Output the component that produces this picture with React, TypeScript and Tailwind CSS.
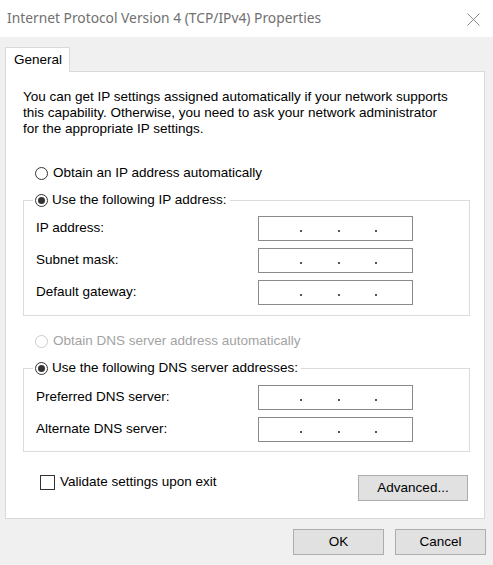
import React from 'react';

const Radio: React.FC<{ checked?: boolean; disabled?: boolean }> = ({ checked, disabled }) => (
    <span
        className={`w-[13px] h-[13px] rounded-full border bg-white flex items-center justify-center shrink-0 ${disabled ? 'border-[#cccccc]' : 'border-[#333333]'}`}
    >
        {checked && <span className="w-[7px] h-[7px] rounded-full bg-[#333333]" />}
    </span>
);

const IpBox: React.FC = () => (
    <div className="w-[155px] h-[25px] border border-[#8a8a8a] bg-white flex items-center pl-[41px] gap-[35.5px] pt-[5px]">
        <span className="w-[2px] h-[2px] bg-[#555555]" />
        <span className="w-[2px] h-[2px] bg-[#555555]" />
        <span className="w-[2px] h-[2px] bg-[#555555]" />
    </div>
);

const FieldRow: React.FC<{ label: string }> = ({ label }) => (
    <div className="flex items-center h-[25px] pl-[12px]">
        <span className="w-[222px]">{label}</span>
        <IpBox />
    </div>
);

const Button: React.FC<{ label: string; w: string }> = ({ label, w }) => (
    <button className={`${w} h-[26px] bg-[#e1e1e1] border border-[#adadad] flex items-center justify-center text-black`}>
        {label}
    </button>
);

export default function App() {
    return (
        <div
            className="w-[493px] h-[565px] bg-[#f0f0f0] flex flex-col text-[13.5px] text-black overflow-hidden"
            style={{ fontFamily: '"Liberation Sans", Arial, sans-serif' }}
        >
            {/* title bar */}
            <div className="h-[37px] bg-white flex items-center justify-between pl-[7px] pr-[13px] shrink-0">
                <span className="text-[13.8px] text-[#707070]" style={{ fontFamily: '"Noto Sans", sans-serif' }}>
                    Internet Protocol Version 4 (TCP/IPv4) Properties
                </span>
                <svg width="13" height="13" viewBox="0 0 13 13" className="mt-[1px]">
                    <path d="M0.5 0.5L12.5 12.5M12.5 0.5L0.5 12.5" stroke="#8a8a8a" strokeWidth="1" />
                </svg>
            </div>

            <div className="pl-[5px] pt-[10px] flex flex-col">
                {/* tab strip */}
                <div className="flex">
                    <div className="w-[65px] h-[25px] -mb-px bg-white border border-b-0 border-[#d9d9d9] relative z-10 flex items-center pl-[8px]">
                        General
                    </div>
                </div>

                {/* tab page */}
                <div className="w-[480px] h-[448px] bg-white border border-[#d9d9d9] flex flex-col">
                    <p className="ml-[17px] mt-[17px] leading-[16px] whitespace-nowrap">
                        You can get IP settings assigned automatically if your network supports<br />
                        this capability. Otherwise, you need to ask your network administrator<br />
                        for the appropriate IP settings.
                    </p>

                    <label className="flex items-center gap-[5px] h-[16px] mt-[28px] ml-[29px]">
                        <Radio />
                        <span>Obtain an IP address automatically</span>
                    </label>

                    <fieldset className="ml-[17px] w-[447px] mt-[11px] border border-[#dcdcdc] pb-[10px]">
                        <legend className="ml-[9px] pl-[2px] pr-[3px] bg-white">
                            <span className="flex items-center gap-[4px] h-[16px]">
                                <Radio checked />
                                <span>Use the following IP address:</span>
                            </span>
                        </legend>
                        <div className="flex flex-col gap-[7px] mt-[8px]">
                            <FieldRow label="IP address:" />
                            <FieldRow label="Subnet mask:" />
                            <FieldRow label="Default gateway:" />
                        </div>
                    </fieldset>

                    <label className="flex items-center gap-[5px] h-[16px] mt-[17px] ml-[29px] text-[#a3a3a3]">
                        <Radio disabled />
                        <span>Obtain DNS server address automatically</span>
                    </label>

                    <fieldset className="ml-[17px] w-[447px] mt-[11px] border border-[#dcdcdc] pb-[9px]">
                        <legend className="ml-[9px] pl-[2px] pr-[3px] bg-white">
                            <span className="flex items-center gap-[4px] h-[16px]">
                                <Radio checked />
                                <span>Use the following DNS server addresses:</span>
                            </span>
                        </legend>
                        <div className="flex flex-col gap-[7px] mt-[9px]">
                            <FieldRow label="Preferred DNS server:" />
                            <FieldRow label="Alternate DNS server:" />
                        </div>
                    </fieldset>

                    <div className="flex items-start justify-between mt-[22px] pl-[34px] pr-[16px]">
                        <label className="flex items-center gap-[5px] h-[16px]">
                            <span className="w-[15px] h-[15px] border border-[#333333] bg-white shrink-0" />
                            <span>Validate settings upon exit</span>
                        </label>
                        <div className="mt-[1px]">
                            <Button label="Advanced..." w="w-[110px]" />
                        </div>
                    </div>
                </div>

                {/* dialog buttons */}
                <div className="flex justify-end gap-[11px] pr-[7px] mt-[10px]">
                    <Button label="OK" w="w-[91px]" />
                    <Button label="Cancel" w="w-[91px]" />
                </div>
            </div>
        </div>
    );
}
